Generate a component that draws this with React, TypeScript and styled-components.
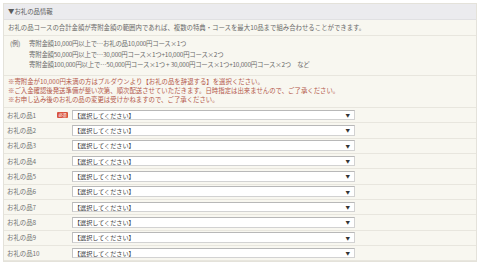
import styled, { createGlobalStyle } from "styled-components";

const Global = createGlobalStyle`
  body {
    margin: 0;
    background: #ffffff;
    font-family: "Noto Sans CJK JP", "Noto Sans", sans-serif;
  }
`;

const Panel = styled.div`
  margin: 3px 3px 0 3px;
  border: 1px solid #e4e2da;
  background: #f8f7f0;
  color: #6a6a6a;
  font-size: 6.4px;
`;

const Header = styled.div`
  height: 15px;
  line-height: 15px;
  padding-left: 4px;
  background: #ebebee;
  border-bottom: 1px solid #e0e0e2;
  color: #5a5a5a;
`;

const Section = styled.div<{ $pt: number; $pb: number; $lh: number }>`
  padding: ${(p) => p.$pt}px 4px ${(p) => p.$pb}px 4px;
  line-height: ${(p) => p.$lh}px;
  border-bottom: 1px solid #e8e6de;
  white-space: nowrap;
`;

const Example = styled.div`
  display: grid;
  grid-template-columns: 19px auto;
  padding-left: 2px;
  letter-spacing: -0.2px;
`;

const Note = styled.div`
  color: #b4574b;
`;

const Row = styled.div`
  display: flex;
  align-items: center;
  height: 14.33px;
  border-bottom: 1px solid #e8e6de;
  padding-left: 3px;
`;

const Label = styled.div`
  width: 50px;
  color: #707070;
`;

const BadgeCell = styled.div`
  width: 15px;
  display: flex;
  align-items: center;
`;

const Badge = styled.span`
  display: inline-block;
  width: 11px;
  height: 6px;
  line-height: 6px;
  border-radius: 1px;
  background: #d9533f;
  color: #fff;
  font-size: 4px;
  text-align: center;
`;

const Select = styled.div`
  box-sizing: border-box;
  width: 283px;
  height: 10.5px;
  display: flex;
  align-items: center;
  justify-content: space-between;
  background: #fff;
  border: 1px solid #d2d2d2;
  border-top-color: #b8b8b8;
  border-left-color: #c2c2c2;
  padding: 0 4px 0 1px;
  color: #3a3a3a;
  font-size: 6.1px;
`;

const Arrow = styled.span`
  font-size: 4.5px;
  color: #333;
`;

const items = Array.from({ length: 10 }, (_, i) => i + 1);

export default function App() {
  return (
    <>
      <Global />
      <Panel>
        <Header>▼お礼の品情報</Header>
        <Section $pt={3} $pb={3} $lh={9}>
          お礼の品コースの合計金額が寄附金額の範囲内であれば、複数の特典・コースを最大10品まで組み合わせることができます。
        </Section>
        <Section $pt={3} $pb={4} $lh={10.5}>
          <Example>
            <span>(例)</span>
            <div>
              <div>寄附金額10,000円以上で…お礼の品10,000円コース×1つ</div>
              <div>寄附金額50,000円以上で…30,000円コース×1つ+10,000円コース×2つ</div>
              <div>
                寄附金額100,000円以上で…50,000円コース×1つ + 30,000円コース×1つ+10,000円コース×2つ　など
              </div>
            </div>
          </Example>
        </Section>
        <Section $pt={1} $pb={2.5} $lh={9.3}>
          <Note>※寄附金が10,000円未満の方はプルダウンより【お礼の品を辞退する】を選択ください。</Note>
          <Note>
            ※ご入金確認後発送準備が整い次第、順次配送させていただきます。日時指定は出来ませんので、ご了承ください。
          </Note>
          <Note>※お申し込み後のお礼の品の変更は受けかねますので、ご了承ください。</Note>
        </Section>
        {items.map((n) => (
          <Row key={n}>
            <Label>お礼の品{n}</Label>
            <BadgeCell>{n === 1 && <Badge>必須</Badge>}</BadgeCell>
            <Select>
              <span>【選択してください】</span>
              <Arrow>▼</Arrow>
            </Select>
          </Row>
        ))}
      </Panel>
    </>
  );
}
